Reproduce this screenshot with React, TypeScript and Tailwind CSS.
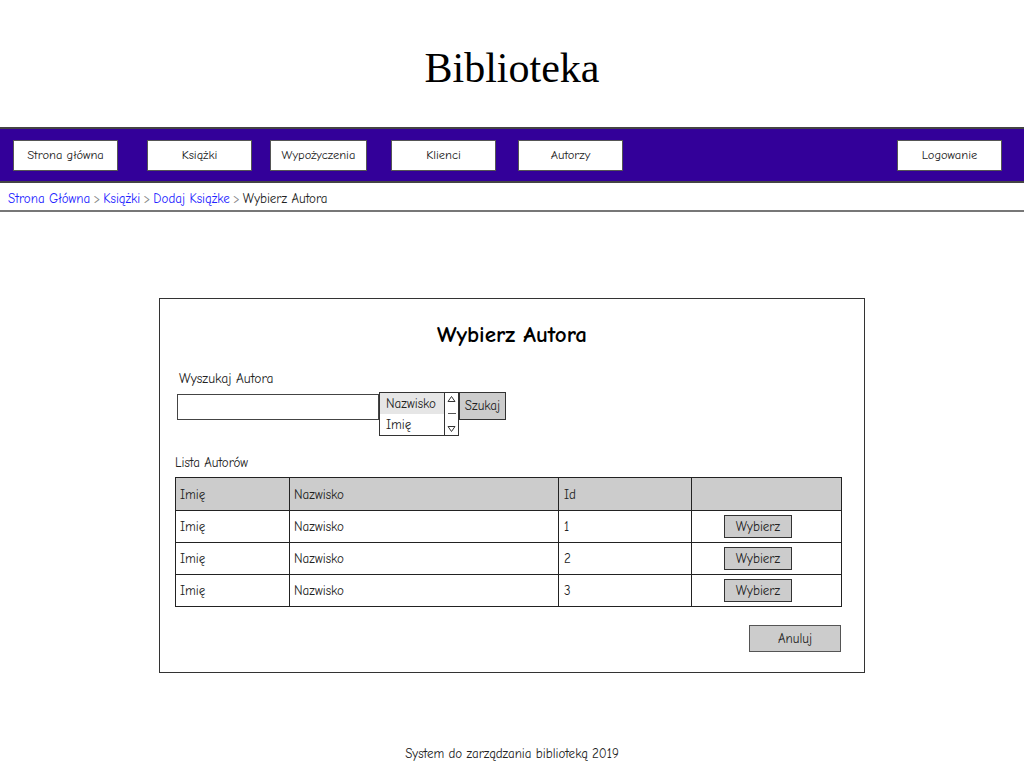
import type { ReactNode } from "react";

const hand = { fontFamily: '"Comic Neue", "Open Sans", "DejaVu Sans", sans-serif' };

// widths and left gaps taken from the mockup, buttons are not evenly spaced
const navItems = [
  { label: "Strona główna", w: "w-[105px]", ml: "ml-0" },
  { label: "Książki", w: "w-[105px]", ml: "ml-[29px]" },
  { label: "Wypożyczenia", w: "w-[97px]", ml: "ml-[18px]" },
  { label: "Klienci", w: "w-[105px]", ml: "ml-[24px]" },
  { label: "Autorzy", w: "w-[105px]", ml: "ml-[22px]" },
];
const authors = [
  { first: "Imię", last: "Nazwisko", id: 1 },
  { first: "Imię", last: "Nazwisko", id: 2 },
  { first: "Imię", last: "Nazwisko", id: 3 },
];

function NavButton({ children, className = "w-[105px]" }: { children: ReactNode; className?: string }) {
  return (
    <div
      className={`flex h-[31px] items-center justify-center border border-[#555] bg-white text-[12.5px] text-[#222] ${className}`}
    >
      {children}
    </div>
  );
}

function GrayButton({ children, className = "" }: { children: ReactNode; className?: string }) {
  return (
    <div
      className={`flex items-center justify-center border border-[#333] bg-[#cccccc] text-[13px] text-[#222] ${className}`}
    >
      {children}
    </div>
  );
}

export default function App() {
  return (
    <div className="flex h-[768px] w-[1024px] flex-col bg-white" style={hand}>
      <header className="flex h-[127px] items-center justify-center pt-[10px]">
        <h1 className="text-[42px] text-black" style={{ fontFamily: '"Liberation Serif", serif' }}>
          Biblioteka
        </h1>
      </header>

      <nav className="flex h-[56px] items-center border-y-2 border-[#444] bg-[#330099] pl-[13px] pr-[22px]">
        {navItems.map((item) => (
          <div key={item.label} className={item.ml}>
            <NavButton className={item.w}>{item.label}</NavButton>
          </div>
        ))}
        <div className="ml-auto">
          <NavButton>Logowanie</NavButton>
        </div>
      </nav>

      <div className="flex h-[29px] items-center border-b-2 border-[#777] px-[8px] pt-[5px] text-[13px]">
        <span className="text-[#2323ff]">Strona Główna</span>
        <span className="mx-[3px] text-[#888]">&gt;</span>
        <span className="text-[#2323ff]">Książki</span>
        <span className="mx-[3px] text-[#888]">&gt;</span>
        <span className="text-[#2323ff]">Dodaj Książke</span>
        <span className="mx-[3px] text-[#888]">&gt;</span>
        <span className="text-[#222]">Wybierz Autora</span>
      </div>

      <main className="flex flex-1 justify-center pt-[86px]">
        <section className="flex h-[375px] w-[706px] flex-col border border-[#333] px-[15px]">
          <h2 className="mt-[19px] text-center text-[23px] font-bold text-black">Wybierz Autora</h2>

          <div className="mt-[16px] pl-[4px] text-[13.5px] text-[#222]">Wyszukaj Autora</div>
          <div className="mt-[3px] flex items-start pl-[2px]">
            <div className="mt-[2px] h-[26px] w-[202px] border border-[#444] bg-white" />
            <div className="flex h-[44px] w-[80px] border border-[#333] bg-white text-[13px] text-[#222]">
              <div className="flex flex-1 flex-col">
                <div className="flex h-[21px] items-center bg-[#e6e6e6] pl-[6px]">Nazwisko</div>
                <div className="flex h-[21px] items-center pl-[6px]">Imię</div>
              </div>
              <div className="flex w-[14px] flex-col items-center justify-between border-l border-[#333] py-[2px]">
                <svg width="9" height="8" viewBox="0 0 9 8">
                  <path d="M1 6.5 L4.5 1.5 L8 6.5 Z" fill="none" stroke="#333" strokeWidth="1" />
                </svg>
                <div className="h-px w-[8px] bg-[#555]" />
                <svg width="9" height="8" viewBox="0 0 9 8">
                  <path d="M1 1.5 L4.5 6.5 L8 1.5 Z" fill="none" stroke="#333" strokeWidth="1" />
                </svg>
              </div>
            </div>
            <GrayButton className="h-[28px] w-[47px]">Szukaj</GrayButton>
          </div>

          <div className="mt-[17px] text-[13px] text-[#222]">Lista Autorów</div>
          <table className="mt-[5px] w-[667px] border-collapse border border-[#222] text-[13px] text-[#222]">
            <colgroup>
              <col className="w-[114px]" />
              <col className="w-[269px]" />
              <col className="w-[133px]" />
              <col />
            </colgroup>
            <thead>
              <tr className="h-[33px] bg-[#cccccc] text-left">
                <th className="border-r border-[#222] pl-[4px] font-normal">Imię</th>
                <th className="border-r border-[#222] pl-[4px] font-normal">Nazwisko</th>
                <th className="border-r border-[#222] pl-[5px] font-normal">Id</th>
                <th className="font-normal" />
              </tr>
            </thead>
            <tbody>
              {authors.map((a) => (
                <tr key={a.id} className="h-[32px] border-t border-[#222]">
                  <td className="border-r border-[#222] pl-[4px]">{a.first}</td>
                  <td className="border-r border-[#222] pl-[4px]">{a.last}</td>
                  <td className="border-r border-[#222] pl-[5px]">{a.id}</td>
                  <td>
                    <div className="flex justify-center pr-[17px]">
                      <GrayButton className="h-[23px] w-[68px]">Wybierz</GrayButton>
                    </div>
                  </td>
                </tr>
              ))}
            </tbody>
          </table>

          <div className="mt-[18px] flex justify-end pr-[8px]">
            <GrayButton className="h-[27px] w-[92px] border-[#555]">Anuluj</GrayButton>
          </div>
        </section>
      </main>

      <footer className="flex h-[95px] items-center justify-center pt-[66px] text-[13px] text-[#222]">
        System do zarządzania biblioteką 2019
      </footer>
    </div>
  );
}
